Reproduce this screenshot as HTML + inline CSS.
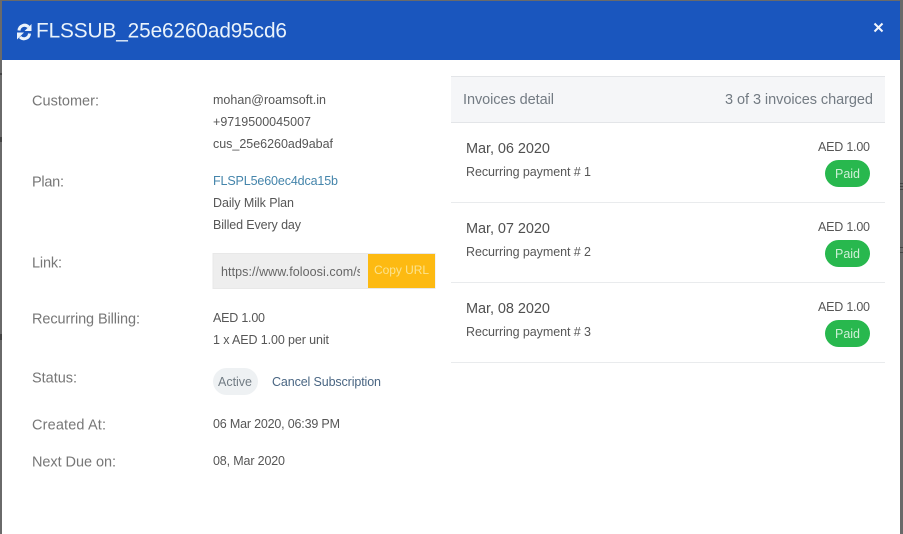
<!DOCTYPE html>
<html><head><meta charset="utf-8">
<style>
html,body{margin:0;padding:0;width:903px;height:534px;overflow:hidden;background:#fff}
svg{display:block}
text{font-family:"Liberation Sans",sans-serif}
.l{font-size:14.5px;fill:#777}
.v{font-size:12.5px;fill:#565656}
</style></head><body>
<svg width="903" height="534" viewBox="0 0 903 534" xmlns="http://www.w3.org/2000/svg">
<rect width="903" height="534" fill="#6a6a6a"/>
<rect x="900" y="183" width="3" height="1" fill="#444"/>
<rect x="900" y="186" width="3" height="1" fill="#444"/>
<rect x="900" y="189" width="3" height="1" fill="#444"/>
<rect x="900" y="247" width="3" height="1" fill="#444"/>
<rect x="900" y="252" width="3" height="1" fill="#444"/>
<rect x="0" y="73" width="2" height="2" fill="#444"/>
<rect x="0" y="137" width="2" height="5" fill="#444"/>
<rect x="0" y="334" width="2" height="6" fill="#444"/>
<rect x="2" y="1" width="898" height="533" fill="#fff"/>
<rect x="2" y="1" width="898" height="59" fill="#1a56be"/>
<g fill="none" stroke="#ecf3fb" stroke-width="3">
<path d="M19 30.500a5.500 5.500 0 0 1 9.500-3.500"/>
<path d="M29.500 33.500a5.500 5.500 0 0 1-9.500 3.500"/>
</g>
<path d="M31.500 24v7h-7zM17 39.500v-7h7z" fill="#ecf3fb"/>
<text x="36" y="37.500" font-size="20.800" fill="#eaf3fb" textLength="251">FLSSUB_25e6260ad95cd6</text>
<path d="M874.500 23.500l8 8M882.500 23.500l-8 8" stroke="#f2f6fc" stroke-width="2" fill="none"/>

<text class="l" x="32" y="105.500" textLength="67">Customer:</text>
<text class="l" x="32" y="186.500" textLength="32">Plan:</text>
<text class="l" x="32" y="267.500" textLength="30">Link:</text>
<text class="l" x="32" y="323.500" textLength="108">Recurring Billing:</text>
<text class="l" x="32" y="382.500" textLength="45">Status:</text>
<text class="l" x="32" y="429.500" textLength="74">Created At:</text>
<text class="l" x="32" y="466.500" textLength="84">Next Due on:</text>

<text class="v" x="213" y="104" textLength="113">mohan@roamsoft.in</text>
<text class="v" x="213" y="126" textLength="98">+9719500045007</text>
<text class="v" x="213" y="148" textLength="120">cus_25e6260ad9abaf</text>
<text class="v" x="213" y="185" textLength="125" style="fill:#4585ab">FLSPL5e60ec4dca15b</text>
<text class="v" x="213" y="207" textLength="81">Daily Milk Plan</text>
<text class="v" x="213" y="229" textLength="88">Billed Every day</text>

<rect x="213" y="253.500" width="155" height="35" fill="#eeeeee"/>
<rect x="213" y="253.500" width="222" height="35" fill="none" stroke="#e8e8e8" stroke-width="1"/>
<svg x="221" y="255" width="139" height="33"><text class="v" x="0" y="21" textLength="142" style="fill:#666">https://www.foloosi.com/s</text></svg>
<rect x="368" y="254" width="67" height="34" fill="#fdba12"/>
<text x="374" y="274" font-size="12" fill="#fbe38f" textLength="55">Copy URL</text>

<text class="v" x="213" y="322" textLength="52">AED 1.00</text>
<text class="v" x="213" y="344" textLength="116">1 x AED 1.00 per unit</text>
<rect x="213" y="368" width="45" height="27" rx="13.500" fill="#eef1f3"/>
<text class="v" x="218" y="386" textLength="34" style="fill:#727c84">Active</text>
<text class="v" x="272" y="386" textLength="109" style="fill:#4a6683">Cancel Subscription</text>
<text class="v" x="213" y="428" textLength="127">06 Mar 2020, 06:39 PM</text>
<text class="v" x="213" y="465" textLength="72">08, Mar 2020</text>

<rect x="451" y="76" width="434" height="47" fill="#f5f6f8"/>
<rect x="451" y="76" width="434" height="1" fill="#e3e5e8"/>
<rect x="451" y="122" width="434" height="1" fill="#e3e5e8"/>
<text x="463" y="104" font-size="14.500" fill="#737b83" textLength="91">Invoices detail</text>
<text x="725" y="104" font-size="14.500" fill="#737b83" textLength="148">3 of 3 invoices charged</text>

<g>
<text x="466" y="153" font-size="14.500" fill="#505050" textLength="84">Mar, 06 2020</text>
<text class="v" x="466" y="176" textLength="125">Recurring payment # 1</text>
<text class="v" x="818" y="151" textLength="52">AED 1.00</text>
<rect x="825" y="160" width="45" height="27" rx="13.500" fill="#28b84e"/>
<text x="835" y="178" font-size="12.500" fill="#cdf0d6" textLength="25">Paid</text>
<rect x="451" y="202" width="434" height="1" fill="#e9ebed"/>
</g>
<g>
<text x="466" y="233" font-size="14.500" fill="#505050" textLength="84">Mar, 07 2020</text>
<text class="v" x="466" y="256" textLength="125">Recurring payment # 2</text>
<text class="v" x="818" y="231" textLength="52">AED 1.00</text>
<rect x="825" y="240" width="45" height="27" rx="13.500" fill="#28b84e"/>
<text x="835" y="258" font-size="12.500" fill="#cdf0d6" textLength="25">Paid</text>
<rect x="451" y="282" width="434" height="1" fill="#e9ebed"/>
</g>
<g>
<text x="466" y="313" font-size="14.500" fill="#505050" textLength="84">Mar, 08 2020</text>
<text class="v" x="466" y="336" textLength="125">Recurring payment # 3</text>
<text class="v" x="818" y="311" textLength="52">AED 1.00</text>
<rect x="825" y="320" width="45" height="27" rx="13.500" fill="#28b84e"/>
<text x="835" y="338" font-size="12.500" fill="#cdf0d6" textLength="25">Paid</text>
<rect x="451" y="362" width="434" height="1" fill="#e9ebed"/>
</g>
</svg>
</body></html>
